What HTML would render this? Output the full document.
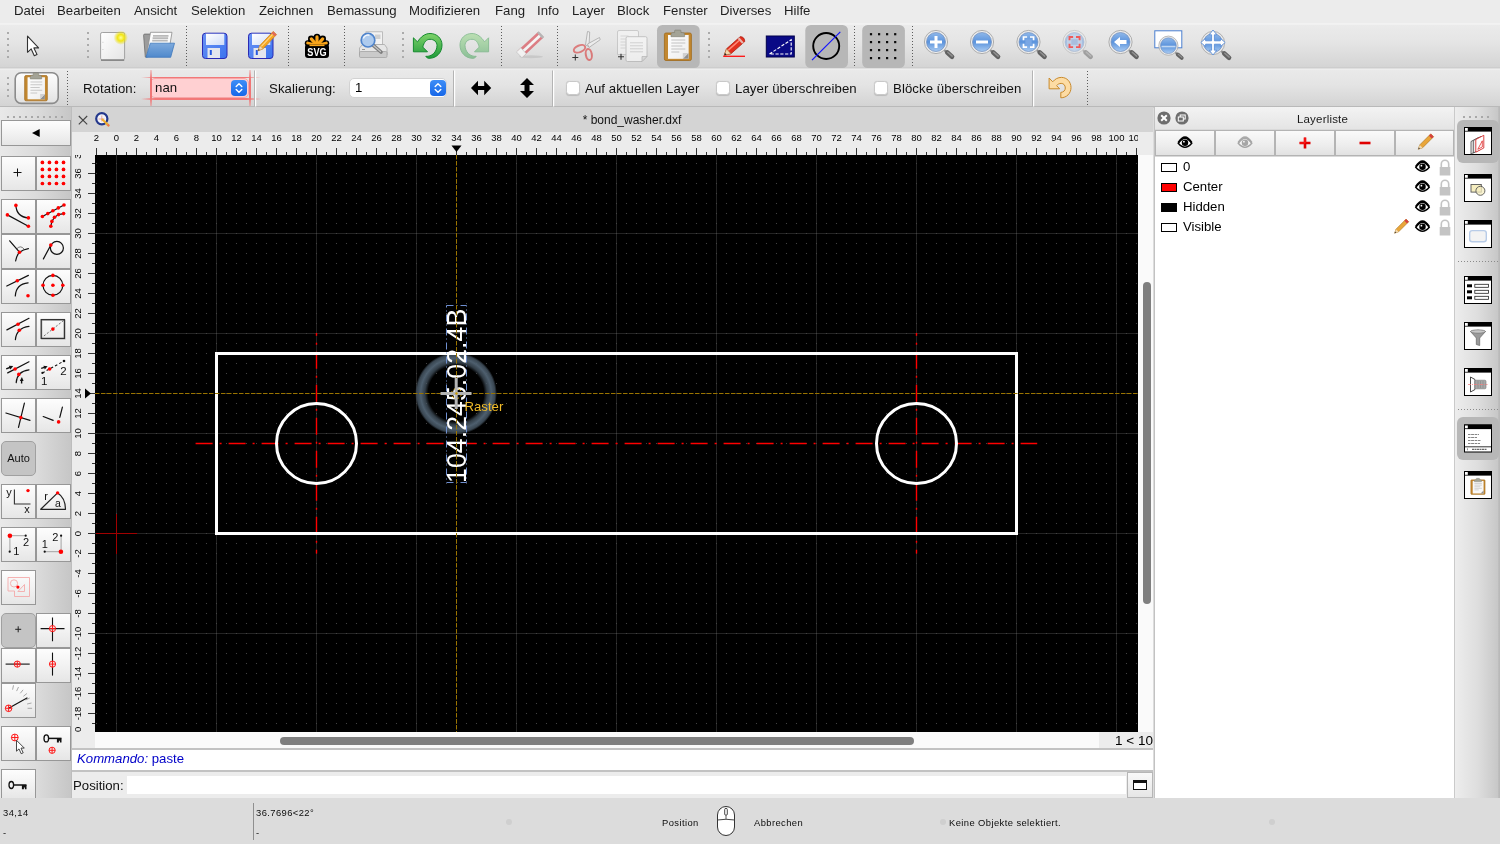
<!DOCTYPE html>
<html lang="de"><head><meta charset="utf-8"><title>bond_washer.dxf</title>
<style>
*{box-sizing:border-box;margin:0;padding:0}
html,body{width:1500px;height:844px;overflow:hidden;background:#dcdcdc;font-family:"Liberation Sans",sans-serif;color:#000}
.abs{position:absolute}
#menubar{position:absolute;left:0;top:0;width:1500px;height:24px;background:#ececec}
#menubar span{position:absolute;top:3px;font-size:13.2px;line-height:16px;color:#1e1e1e;white-space:nowrap}
#tb1{position:absolute;left:0;top:24px;width:1500px;height:45px;background:linear-gradient(#ebebeb,#e5e5e5 40%,#d3d3d3)}
#tb2{position:absolute;left:0;top:69px;width:1500px;height:39px;background:linear-gradient(#eaeaea,#e4e4e4 40%,#d2d2d2)}
.vdots{position:absolute;width:1px;background:repeating-linear-gradient(#6a6a6a 0 1px,transparent 1px 3px)}
.hdots{position:absolute;height:1px;background:repeating-linear-gradient(90deg,#8a8a8a 0 1px,transparent 1px 3px)}
.grip{position:absolute;width:2px;background:repeating-linear-gradient(#a8a8a8 0 2px,transparent 2px 6px)}
.hgrip{position:absolute;height:2px;background:repeating-linear-gradient(90deg,#a8a8a8 0 2px,transparent 2px 6px)}
.pressed{position:absolute;background:#b9b9b9;border-radius:5px}
.lbl{position:absolute;font-size:13.2px;line-height:16px;white-space:nowrap;color:#111;letter-spacing:.08px}
.chk{position:absolute;width:13.500px;height:13.500px;border-radius:3.5px;background:#fff;border:1px solid #c9c9c9;box-shadow:0 0.5px 1px rgba(0,0,0,.15)}
.combo{position:absolute;height:20px;border-radius:5px;background:#fff;border:1px solid #d2d2d2;font-size:13.2px;line-height:17px;padding-left:5px}
.combo i{position:absolute;right:1px;top:1px;width:16px;height:16px;border-radius:4px;background:linear-gradient(#3f8ef7,#1767e8)}
#left{position:absolute;left:0;top:107px;width:72px;height:691px;background:linear-gradient(90deg,#e9e9e9,#dcdcdc 50%,#c6c6c6);border-right:1px solid #bdbdbd}
.tbtn{position:absolute;width:35px;height:35px;border:1px solid #979797;background:linear-gradient(#fdfdfd,#f2f2f2 50%,#e6e6e6)}
.tbtn svg{position:absolute;left:-1px;top:-1px;width:35px;height:35px;overflow:visible}
.tbtn.on{background:#c4c4c4;border-radius:5px;border-color:#a0a0a0}
#tabbar{position:absolute;left:72px;top:107px;width:1081px;height:25px;background:#d4d4d4}
#rulerbg{position:absolute;left:72px;top:132px;width:1081px;height:616px;background:#ececec}
#canvas{position:absolute;left:95px;top:155px;width:1043px;height:577px;background:#000}
#vsb{position:absolute;left:1138px;top:155px;width:15px;height:577px;background:#fafafa}
#hsb{position:absolute;left:95px;top:732px;width:1058px;height:16px;background:#fafafa}
#midborder{position:absolute;left:1153.500px;top:107px;width:2px;height:691px;background:#c2c2c2}
#cmd{position:absolute;left:72px;top:748px;width:1081px;height:50px;background:#ececec}
#right{position:absolute;left:1155px;top:107px;width:299px;height:691px;background:#fff}
#rtb{position:absolute;left:1454px;top:107px;width:46px;height:691px;background:linear-gradient(90deg,#ededed,#dedede 50%,#c7c7c7 96%,#b9b9b9 97%);border-left:1px solid #cacaca}
#status{position:absolute;left:0;top:798px;width:1500px;height:46px;background:#dcdcdc}
#status span{position:absolute;font-size:9.400px;line-height:12px;white-space:nowrap;color:#0c0c0c;letter-spacing:.42px}
.lrow{position:absolute;left:0;width:298px;height:20px}
.lrow .sw{position:absolute;left:6px;top:6px;width:16px;height:9px;border:1px solid #000}
.lrow .nm{position:absolute;left:28px;top:2px;font-size:13.2px;line-height:16px}
.lbtn{position:absolute;top:23px;height:26px;width:60px;border:1px solid #b4b4b4;background:linear-gradient(#fafafa,#ededed 60%,#e2e2e2)}
.rico{position:absolute;left:9px;width:27px;height:27px;background:#fff;border:1px solid #000}
.rico:before{content:"";position:absolute;left:0;top:0;right:0;height:4px;background:#000}
.rico:after{content:"";position:absolute;left:0;top:0;width:3px;height:3px;background:#fff;border-right:1px solid #000;border-bottom:1px solid #000}
</style></head><body>

<div id="wrap" style="position:absolute;left:0;top:0;width:1500px;height:844px;will-change:transform">
<div id="menubar"><span style="left:14px">Datei</span><span style="left:57px">Bearbeiten</span><span style="left:134px">Ansicht</span><span style="left:191px">Selektion</span><span style="left:259px">Zeichnen</span><span style="left:327px">Bemassung</span><span style="left:409px">Modifizieren</span><span style="left:495px">Fang</span><span style="left:537px">Info</span><span style="left:572px">Layer</span><span style="left:617px">Block</span><span style="left:663px">Fenster</span><span style="left:720px">Diverses</span><span style="left:784px">Hilfe</span></div>
<div id="tb1"></div>
<div id="tb2">
<span class="lbl" style="left:83px;top:12px">Rotation:</span>
<div class="abs" style="left:141px;top:6px;width:120px;height:26px;overflow:visible">
<div class="abs" style="left:9px;top:3px;width:99px;height:20px;border-radius:5px;background:#ffd0d2;border:1px solid #f6a6a8"></div>
<div class="abs" style="left:0;top:1.500px;width:120px;height:1.600px;background:linear-gradient(90deg,rgba(240,90,90,0),#f27878 12%,#f27878 88%,rgba(240,90,90,0))"></div>
<div class="abs" style="left:0;top:23px;width:120px;height:1.600px;background:linear-gradient(90deg,rgba(240,90,90,0),#f27878 12%,#f27878 88%,rgba(240,90,90,0))"></div>
<div class="abs" style="left:8.500px;top:-5px;width:2px;height:37px;background:linear-gradient(rgba(240,110,110,.25),#f07676 25%,#f07676 75%,rgba(240,110,110,.25))"></div>
<div class="abs" style="left:107.800px;top:-5px;width:2px;height:37px;background:linear-gradient(rgba(240,110,110,.25),#f07676 25%,#f07676 75%,rgba(240,110,110,.25))"></div>
</div>
<span class="lbl" style="left:155px;top:11px">nan</span>
<i class="abs" style="left:231px;top:11px;width:16px;height:16px;border-radius:4px;background:linear-gradient(#3f8ef7,#1767e8)"></i>
<svg class="abs" style="left:231px;top:11px" width="16" height="16"><path d="M5.200 6.500L8 3.800L10.800 6.500M5.200 9.500L8 12.200L10.800 9.500" stroke="#fff" stroke-width="1.400" fill="none" stroke-linecap="round" stroke-linejoin="round"/></svg>
<span class="lbl" style="left:269px;top:12px">Skalierung:</span>
<div class="combo" style="left:349px;top:9px;width:98px"><span style="position:relative;top:0">1</span></div>
<i class="abs" style="left:430px;top:11px;width:16px;height:16px;border-radius:4px;background:linear-gradient(#3f8ef7,#1767e8)"></i>
<svg class="abs" style="left:430px;top:11px" width="16" height="16"><path d="M5.200 6.500L8 3.800L10.800 6.500M5.200 9.500L8 12.200L10.800 9.500" stroke="#fff" stroke-width="1.400" fill="none" stroke-linecap="round" stroke-linejoin="round"/></svg>
<div class="chk" style="left:566px;top:12px"></div><span class="lbl" style="left:585px;top:12px">Auf aktuellen Layer</span>
<div class="chk" style="left:716px;top:12px"></div><span class="lbl" style="left:735px;top:12px">Layer überschreiben</span>
<div class="chk" style="left:874px;top:12px"></div><span class="lbl" style="left:893px;top:12px">Blöcke überschreiben</span>

</div>
<div class="abs" style="left:0;top:22px;width:1500px;height:0"><svg style="position:absolute;left:0;top:-22px;overflow:visible" width="1500" height="110" viewBox="0 0 1500 110" font-family="Liberation Sans, sans-serif">
<defs>
<linearGradient id="gPage" x1="0" y1="0" x2="1" y2="1"><stop offset="0" stop-color="#ffffff"/><stop offset="1" stop-color="#e4e4e4"/></linearGradient>
<linearGradient id="gLens" x1="0" y1="0" x2="0" y2="1"><stop offset="0" stop-color="#8fb8ea"/><stop offset=".5" stop-color="#5b93dc"/><stop offset="1" stop-color="#a9cbf2"/></linearGradient>
<linearGradient id="gLensR" x1="0" y1="0" x2="0" y2="1"><stop offset="0" stop-color="#c3d4ea"/><stop offset=".5" stop-color="#a9c0e0"/><stop offset="1" stop-color="#d3e0f2"/></linearGradient>
<linearGradient id="gFlop" x1="0" y1="0" x2="1" y2="1"><stop offset="0" stop-color="#6b93f5"/><stop offset="1" stop-color="#3b73ee"/></linearGradient>
<linearGradient id="gLab" x1="0" y1="0" x2="1" y2="1"><stop offset="0" stop-color="#ffffff"/><stop offset="1" stop-color="#cfdcf8"/></linearGradient>
<linearGradient id="gGreen" x1="0" y1="0" x2="0" y2="1"><stop offset="0" stop-color="#7fd36a"/><stop offset="1" stop-color="#1f9a3a"/></linearGradient>
<radialGradient id="gGlow"><stop offset="0" stop-color="#ffff9a"/><stop offset=".45" stop-color="#f2e614"/><stop offset="1" stop-color="#e8dc10" stop-opacity=".0"/></radialGradient>
<g id="mag">
<path d="M7 7L11.500 10.800" stroke="#8a8a8a" stroke-width="2.200" stroke-linecap="round"/>
<path d="M11.300 10.600L16 14.700" stroke="#626262" stroke-width="4.700" stroke-linecap="round"/>
<path d="M11.800 10.300L16.200 14.100" stroke="#909090" stroke-width="1.500" stroke-linecap="round"/>
<circle cx="0" cy="0" r="11.600" fill="#ececec" stroke="#a6a6a6" stroke-width=".9"/>
<circle cx="0" cy="0" r="9.500" fill="url(#gLens)" stroke="#6f8cbc" stroke-width=".7"/>
</g>
<linearGradient id="gBtn" x1="0" y1="0" x2="0" y2="1"><stop offset="0" stop-color="#fdfdfd"/><stop offset=".5" stop-color="#f1f1f1"/><stop offset="1" stop-color="#e2e2e2"/></linearGradient>
<linearGradient id="gFold" x1="0" y1="0" x2="0" y2="1"><stop offset="0" stop-color="#7eaadd"/><stop offset="1" stop-color="#4f89cc"/></linearGradient>
</defs>
<!-- row separators -->
<rect x="0" y="23.500" width="1500" height="1" fill="#f7f7f7"/>
<rect x="0" y="67.5" width="1500" height="1" fill="#c6c6c6"/>
<rect x="0" y="68.5" width="1500" height="1" fill="#f2f2f2"/>
<rect x="0" y="106" width="1500" height="1.2" fill="#b9b9b9"/>
<!-- grips row1 -->
<g fill="#ababab">
<g id="grip5"><rect x="7" y="32" width="2" height="2"/><rect x="7" y="38" width="2" height="2"/><rect x="7" y="44" width="2" height="2"/><rect x="7" y="50" width="2" height="2"/><rect x="7" y="56" width="2" height="2"/></g>
<use href="#grip5" x="80"/><use href="#grip5" x="395"/><use href="#grip5" x="701"/>
</g>
<!-- dotted separators row1 -->
<g stroke="#5c5c5c" stroke-width="1" stroke-dasharray="1 2">
<path d="M186.5 26V67"/><path d="M288.5 26V67"/><path d="M344.5 26V67"/><path d="M501.5 26V67"/><path d="M557.5 26V67"/><path d="M854.5 26V67"/><path d="M912.5 26V67"/>
</g>
<!-- pressed backgrounds -->
<rect x="657" y="25" width="42.700" height="43" rx="5.500" fill="#b7b7b7"/>
<rect x="805.300" y="25" width="42.700" height="43" rx="5.500" fill="#b7b7b7"/>
<rect x="862.200" y="25" width="42.700" height="43" rx="5.500" fill="#b7b7b7"/>
<!-- arrow cursor -->
<path d="M27.500 36.200V52.300L31.200 48.900L34.300 55.800L37 54.600L33.900 47.900H38.600Z" fill="#fff" stroke="#333" stroke-width="1.1" stroke-linejoin="round"/>
<!-- new document -->
<rect x="100.600" y="32.500" width="24" height="27.300" rx="1.600" fill="url(#gPage)" stroke="#a2a2a2" stroke-width="1"/>
<path d="M101 60.200h23.200" stroke="#7e7e7e" stroke-width="1.300"/>
<path d="M102.300 42.300h1.200M102.300 49.500h1.200" stroke="#c8c8c8" stroke-width=".8"/>
<circle cx="120.800" cy="37.700" r="7.200" fill="url(#gGlow)"/>
<!-- open folder -->
<path d="M143.600 35.300q0-1.200 1.200-1.200h6.500l-3.800 23h-2.200z" fill="#9c9c9c" stroke="#6c6c6c" stroke-width=".8"/>
<path d="M150.500 32.300h21.500l-4 23.700h-21.500z" fill="#fbfbfb" stroke="#8c8c8c" stroke-width=".8"/>
<path d="M153 35.800h15.500M152.600 38.200h15.500M152.200 40.600h15.500" stroke="#b9b9b9" stroke-width="1.700"/>
<path d="M150.300 43.200h24.200l-3.800 14.100h-24.700z" fill="url(#gFold)" stroke="#3f78bd" stroke-width=".8" stroke-linejoin="round"/>
<!-- save -->
<g id="floppy">
<rect x="202.500" y="33.200" width="24.500" height="25.300" rx="3" fill="url(#gFlop)" stroke="#2a2ab4" stroke-width="1"/>
<path d="M206 33.800h18.300v11.200h-18.300z" fill="url(#gLab)"/>
<rect x="207.500" y="48" width="12.500" height="10" fill="#e4e6ee"/>
<rect x="209.800" y="50" width="2" height="5" fill="#2a5be0"/>
</g>
<use href="#floppy" x="46"/>
<!-- pencil on save-as -->
<g transform="translate(258,50.800) rotate(-46.500)">
<path d="M0 0L5 -2.300H24.500V2.300H5Z" fill="#f5a623" stroke="#c8780a" stroke-width=".6"/>
<path d="M0 0L5 -2.300V2.300Z" fill="#f3d9b0" stroke="#b98a4a" stroke-width=".4"/>
<path d="M0 0L1.800 -.8V.8Z" fill="#333"/>
<path d="M5.500 -.600H22" stroke="#ffd889" stroke-width="1.100"/>
<rect x="22" y="-2.300" width="2.500" height="4.600" fill="#e06a5a"/>
</g>
<!-- SVG logo -->
<g>
<circle cx="317" cy="37.200" r="3.500" fill="#000"/><circle cx="311.300" cy="38.900" r="3.300" fill="#000"/><circle cx="322.700" cy="38.900" r="3.300" fill="#000"/><circle cx="307.800" cy="43.200" r="3" fill="#000"/><circle cx="326.200" cy="43.200" r="3" fill="#000"/>
<path d="M308 40h18v7h-18z" fill="#000"/>
<g stroke="#f9a51a" stroke-width="3.200" stroke-linecap="round" fill="none"><path d="M317 45.500V36.900"/><path d="M317 45.500L311.300 38.900"/><path d="M317 45.500L322.700 38.900"/><path d="M317 45.500L307.800 43.200"/><path d="M317 45.500L326.200 43.200"/></g>
<path d="M305 46.500q0-2 2-2h20q2 0 2 2v8.500q0 3-3 3h-18q-3 0-3-3z" fill="#000"/>
<path d="M309.500 45.300h15" stroke="#f9a51a" stroke-width="1.600"/>
<text x="317" y="56.300" font-size="11.700" font-weight="bold" fill="#fff" text-anchor="middle" textLength="19.300" lengthAdjust="spacingAndGlyphs">SVG</text>
</g>
<!-- print preview -->
<g>
<rect x="366" y="31.800" width="16.500" height="13" fill="#f2f2f2" stroke="#b0b0b0" stroke-width=".8"/>
<rect x="375" y="34.500" width="5.500" height="4.500" fill="#cfcfcf"/>
<path d="M362.500 44.500h22l2.500 3.500v7h-27.500v-7z" fill="#e6e6e6" stroke="#a8a8a8" stroke-width=".8"/>
<rect x="359.500" y="51.500" width="27.500" height="6" rx="1.200" fill="#cacaca" stroke="#9e9e9e" stroke-width=".7"/>
<path d="M362 49.500h3" stroke="#999" stroke-width="1"/>
<path d="M373 45.200L381 52" stroke="#7d7d7d" stroke-width="3.600" stroke-linecap="round"/>
<path d="M373.500 45.500L380.500 51.500" stroke="#c4c4c4" stroke-width="1.200" stroke-linecap="round"/>
<circle cx="368" cy="40.200" r="6.800" fill="#aecbee" stroke="#4f84cc" stroke-width="1.700"/>
<path d="M363.300 38.500a5.200 5.200 0 0 1 6.200-3.300" stroke="#f2f7fd" stroke-width="1.500" fill="none"/>
</g>
<!-- undo -->
<g id="undo">
<path d="M413.400 37.800L417.500 41.900C420.500 37 425 33.500 430 33.500C437 33.500 442 38.500 442 45C442 53 436 58.500 429 58.300C427.500 58.200 426.300 57.400 425.800 56.300C431.500 57 437 52 437 45.500C437 41.800 434 39.300 430 39.300C426.500 39.300 424 42 422.800 47.100L427.500 51.800H413.400Z" fill="url(#gGreen)" stroke="#158a2e" stroke-width="1" stroke-linejoin="round"/>
</g>
<!-- redo (disabled look) -->
<g transform="translate(902,0) scale(-1,1)" opacity=".42"><use href="#undo"/></g>
<!-- eraser -->
<g opacity=".62">
<ellipse cx="531" cy="56.800" rx="12" ry="1.500" fill="#bdbdbd"/>
<g transform="translate(530.500,44.300) rotate(-43)">
<rect x="-14.500" y="-4" width="29" height="8" rx="1" fill="#d8404a"/>
<rect x="-14.500" y="-1.300" width="29" height="2.800" fill="#fff"/>
<rect x="-15.500" y="-4" width="6" height="8" fill="#fff" stroke="#aaa" stroke-width=".6"/>
<rect x="12.500" y="-4" width="2.500" height="8" fill="#999"/>
</g></g>
<!-- cut -->
<g opacity=".6">
<path d="M585.500 45L587.500 31.500L589.700 32L589 46.500Z" fill="#f2f2f2" stroke="#7d7d7d" stroke-width=".8"/>
<path d="M587.500 44L599.500 37.500L600.200 39.700L589 47.500Z" fill="#f2f2f2" stroke="#7d7d7d" stroke-width=".8"/>
<ellipse cx="579.500" cy="48.800" rx="6" ry="3.300" transform="rotate(-22 579.500 48.800)" fill="none" stroke="#d83a3a" stroke-width="2"/>
<ellipse cx="588.800" cy="54.500" rx="3" ry="5.600" transform="rotate(-10 588.800 54.500)" fill="none" stroke="#d83a3a" stroke-width="2"/>
</g>
<path d="M572.300 57.500h6M575.300 54.500v6" stroke="#333" stroke-width="1"/>
<!-- copy -->
<g opacity=".6">
<path d="M617.500 32q0-1.500 1.500-1.500h18q1.500 0 1.500 1.500v22.500h-21z" fill="#f6f6f6" stroke="#a8a8a8" stroke-width=".8"/>
<path d="M620.500 36h8M620.500 39h5M620.500 42h5M620.500 45h5M620.500 48h5" stroke="#c4c4c4" stroke-width=".9"/>
<path d="M626 38.200q0-1.500 1.500-1.500h18q1.500 0 1.500 1.500v18.300l-5 5h-14.500q-1.500 0-1.500-1.500z" fill="#fbfbfb" stroke="#9a9a9a" stroke-width=".8"/>
<path d="M647 56.500h-5v5z" fill="#d6d6d6" stroke="#9a9a9a" stroke-width=".7"/>
<path d="M630 42.800h13M630 45.800h13M630 48.800h13M630 51.800h13" stroke="#bdbdbd" stroke-width=".9"/>
</g>
<path d="M618 56.700h6M621 53.700v6" stroke="#333" stroke-width="1.100"/>
<!-- paste (clipboard) -->
<g id="clip">
<rect x="664.400" y="33" width="27" height="27.500" rx="1.600" fill="#c2872f" stroke="#a06a1c" stroke-width=".8"/>
<path d="M668 35h20.500v23.700h-20.500z" fill="#fbfbfb"/>
<path d="M668 35h20.500v23.700h-20.500z" fill="url(#gPage)" opacity=".6"/>
<path d="M671.300 40h14M671.300 43h14M671.300 46h11M671.300 49h14M671.300 52h8" stroke="#c2c2c2" stroke-width="1"/>
<path d="M688.500 53v5.700h-5.700z" fill="#8f8f8f"/>
<path d="M682.800 58.700l5.700-5.700h-5.700z" fill="#d0d0d0"/>
<path d="M671 34.600q0-2 2-2h1.600v-1.700q0-.8.800-.8h4.800q.8 0 .8.800v1.700h1.600q2 0 2 2v2.100h-13.600z" fill="#a3a396" stroke="#7d7d70" stroke-width=".6"/>
</g>
<!-- pencil draw -->
<g transform="translate(724.200,55.300) rotate(-41.500)">
<path d="M0 0L6 -3.300H24.500Q27.500 0 24.500 3.300H6Z" fill="#e2301e" stroke="#a81c10" stroke-width=".7"/>
<path d="M0 0L6 -3.300V3.300Z" fill="#f3d7ae" stroke="#a8793a" stroke-width=".5"/>
<path d="M0 0L2.300 -1.200V1.200Z" fill="#222"/>
<path d="M6.500 -1.200H21" stroke="#ff8a78" stroke-width="1.500"/>
<rect x="21" y="-3.300" width="2.200" height="6.600" fill="#e8b8b0"/>
</g>
<path d="M723.200 56.300H745" stroke="#ff1010" stroke-width="1.300"/>
<!-- isometric/blue -->
<rect x="766.300" y="36" width="28" height="21" fill="#0a0a86" stroke="#00004c" stroke-width="1"/>
<path d="M769.500 54L791.200 39.700V54Z" fill="none" stroke="#fff" stroke-width="1.100" stroke-dasharray="3.200 1.600"/>
<!-- circle slash -->
<circle cx="826.200" cy="46" r="13" fill="none" stroke="#000" stroke-width="1.900"/>
<path d="M812 60.200L840.300 31.800" stroke="#1414ff" stroke-width="1.200"/>
<!-- grid dots -->
<g fill="#0a0a0a"><rect x="869.9" y="33.1" width="2.200" height="2.200"/><rect x="878" y="33.1" width="2.200" height="2.200"/><rect x="886" y="33.1" width="2.200" height="2.200"/><rect x="894.1" y="33.1" width="2.200" height="2.200"/><rect x="869.9" y="41" width="2.200" height="2.200"/><rect x="878" y="41" width="2.200" height="2.200"/><rect x="886" y="41" width="2.200" height="2.200"/><rect x="894.1" y="41" width="2.200" height="2.200"/><rect x="869.9" y="49" width="2.200" height="2.200"/><rect x="878" y="49" width="2.200" height="2.200"/><rect x="886" y="49" width="2.200" height="2.200"/><rect x="894.1" y="49" width="2.200" height="2.200"/><rect x="869.9" y="57" width="2.200" height="2.200"/><rect x="878" y="57" width="2.200" height="2.200"/><rect x="886" y="57" width="2.200" height="2.200"/><rect x="894.1" y="57" width="2.200" height="2.200"/></g>
<!-- zoom icons -->
<use href="#mag" x="936" y="42"/>
<path d="M930 42h12M936 36v12" stroke="#fff" stroke-width="3"/>
<use href="#mag" x="982" y="42"/>
<path d="M976 42h12" stroke="#fff" stroke-width="3"/>
<use href="#mag" x="1028.500" y="42"/>
<rect x="1025.300" y="39.200" width="6.400" height="5.600" fill="#7aa7e4"/>
<path d="M1023.500 40.300v-3.300h3.600M1030 37h3.600v3.300M1033.600 43.800v3.300h-3.600M1027.100 47.100h-3.600v-3.300" stroke="#fff" stroke-width="1.700" fill="none"/>
<g opacity=".5"><use href="#mag" x="1074.500" y="42"/></g>
<circle cx="1074.500" cy="42" r="7.800" fill="#cdd9ea" opacity=".7"/>
<rect x="1071.300" y="39.200" width="6.400" height="5.600" fill="#a9bede"/>
<path d="M1069.500 40.300v-3.300h3.600M1076 37h3.600v3.300M1079.600 43.800v3.300h-3.600M1073.100 47.100h-3.600v-3.300" stroke="#ee5a5a" stroke-width="1.900" fill="none"/>
<use href="#mag" x="1120.500" y="42"/>
<path d="M1114 42l6-5v3h6.500v4h-6.500v3z" fill="#fff"/>
<rect x="1154.800" y="30.800" width="27" height="17" fill="#fff" stroke="#4a7fd0" stroke-width="1"/>
<g transform="translate(1168.400,45.700) scale(.83)"><use href="#mag"/></g>
<path d="M1161.500 46.500h14" stroke="#d6e6f8" stroke-width="1.600" opacity=".8"/>
<use href="#mag" x="1213" y="43"/>
<path d="M1213 30l3.800 4.800h-2.400v6h6v-2.400l4.800 4.100l-4.800 4.100v-2.400h-6v6h2.400l-3.800 4.800l-3.800-4.800h2.400v-6h-6v2.400l-4.800-4.100l4.800-4.100v2.400h6v-6h-2.400z" fill="#fff" stroke="#5b8fd8" stroke-width=".9"/>
<!-- ============ row 2 icons ============ -->
<g fill="#ababab"><rect x="7" y="77" width="2" height="2"/><rect x="7" y="83" width="2" height="2"/><rect x="7" y="89" width="2" height="2"/><rect x="7" y="95" width="2" height="2"/></g>
<rect x="15.200" y="72.800" width="43" height="30.600" rx="6" fill="url(#gBtn)" stroke="#8c8c8c" stroke-width="1.600"/>
<g transform="translate(36,88.200) scale(.84,.92) translate(-677.900,-46.750)"><use href="#clip"/></g>
<g stroke="#5c5c5c" stroke-width="1" stroke-dasharray="1 2"><path d="M67.500 71V106"/><path d="M1087.500 71V106"/></g>
<g><rect x="255" y="70.500" width="1.200" height="36" fill="#fff"/><rect x="254" y="70.500" width="1" height="36" fill="#b4b4b4"/><rect x="454" y="70.500" width="1.200" height="36" fill="#fff"/><rect x="453" y="70.500" width="1" height="36" fill="#b4b4b4"/><rect x="553" y="70.500" width="1.200" height="36" fill="#fff"/><rect x="552" y="70.500" width="1" height="36" fill="#b4b4b4"/><rect x="1033" y="70.500" width="1.200" height="36" fill="#fff"/><rect x="1032" y="70.500" width="1" height="36" fill="#b4b4b4"/></g>
<!-- flip arrows -->
<path d="M471 88l7-7.200v5.300h6.200v-5.300l7 7.200l-7 7.200v-5.300h-6.200v5.300z" fill="#000"/>
<path d="M527 78l7 7h-4.500v6h4.500l-7 7l-7-7h4.500v-6h-4.500z" fill="#000"/>
<!-- reset arrow (orange undo) -->
<path d="M1049.100 78L1052.700 81.800C1055 79 1058 77.400 1061.400 77.400C1067 77.400 1071 82 1071 87.600C1071 93.500 1066.500 97.800 1060.800 97.800L1060.800 92.400C1063.500 92.200 1065.300 90.500 1065.300 88C1065.300 85.300 1063.700 83.400 1061.200 83.400C1059.300 83.400 1057.800 84.200 1056.600 85.600L1059.600 88.800H1049.100Z" fill="#fddca4" stroke="#c98a2c" stroke-width="1" stroke-linejoin="round"/>
</svg>
</div>
<div id="left">
<div class="hgrip" style="left:7px;top:9px;width:56px"></div>
<div class="tbtn" style="left:1px;top:13px;width:70px;height:26px"><svg style="width:68px;height:24px" viewBox="0 0 68 24"><path d="M31 13L38.700 9V17Z" fill="#000"/></svg></div>
<div class="tbtn" style="left:1px;top:49px"><svg viewBox="0 0 35 35"><path d="M12.500 16.500h8M16.500 12.500v8" stroke="#111" stroke-width="1"/></svg></div>
<div class="tbtn" style="left:36px;top:49px"><svg viewBox="0 0 35 35"><circle cx="6.4" cy="6.4" r="1.85" fill="#ff0000"/><circle cx="6.4" cy="13.43" r="1.85" fill="#ff0000"/><circle cx="6.4" cy="20.46" r="1.85" fill="#ff0000"/><circle cx="6.4" cy="27.490000000000002" r="1.85" fill="#ff0000"/><circle cx="13.43" cy="6.4" r="1.85" fill="#ff0000"/><circle cx="13.43" cy="13.43" r="1.85" fill="#ff0000"/><circle cx="13.43" cy="20.46" r="1.85" fill="#ff0000"/><circle cx="13.43" cy="27.490000000000002" r="1.85" fill="#ff0000"/><circle cx="20.46" cy="6.4" r="1.85" fill="#ff0000"/><circle cx="20.46" cy="13.43" r="1.85" fill="#ff0000"/><circle cx="20.46" cy="20.46" r="1.85" fill="#ff0000"/><circle cx="20.46" cy="27.490000000000002" r="1.85" fill="#ff0000"/><circle cx="27.490000000000002" cy="6.4" r="1.85" fill="#ff0000"/><circle cx="27.490000000000002" cy="13.43" r="1.85" fill="#ff0000"/><circle cx="27.490000000000002" cy="20.46" r="1.85" fill="#ff0000"/><circle cx="27.490000000000002" cy="27.490000000000002" r="1.85" fill="#ff0000"/></svg></div>
<div class="tbtn" style="left:1px;top:92px"><svg viewBox="0 0 35 35"><path d="M6.400 15.900L27.400 27.300M14.900 6.400Q15.500 18 27.400 18.900" stroke="#111" stroke-width="1.2" fill="none" stroke-linecap="round"/><circle cx="6.4" cy="15.9" r="1.8" fill="#ff0000"/><circle cx="27.4" cy="27.3" r="1.8" fill="#ff0000"/><circle cx="14.9" cy="6.4" r="1.8" fill="#ff0000"/><circle cx="27.4" cy="18.9" r="1.8" fill="#ff0000"/></svg></div>
<div class="tbtn" style="left:36px;top:92px"><svg viewBox="0 0 35 35"><path d="M6.400 17.500L28 6M14.800 27.300L15.900 22.400L18.500 18.200L22.600 15.600L27.600 14.600" stroke="#111" stroke-width="1.2" fill="none" stroke-linecap="round"/><circle cx="6.4" cy="17.5" r="1.8" fill="#ff0000"/><circle cx="11.8" cy="14.6" r="1.8" fill="#ff0000"/><circle cx="16.9" cy="11.8" r="1.8" fill="#ff0000"/><circle cx="22.3" cy="8.9" r="1.8" fill="#ff0000"/><circle cx="28" cy="6" r="1.8" fill="#ff0000"/><circle cx="14.8" cy="27.3" r="1.8" fill="#ff0000"/><circle cx="15.9" cy="22.4" r="1.8" fill="#ff0000"/><circle cx="18.5" cy="18.2" r="1.8" fill="#ff0000"/><circle cx="22.6" cy="15.6" r="1.8" fill="#ff0000"/><circle cx="27.6" cy="14.6" r="1.8" fill="#ff0000"/></svg></div>
<div class="tbtn" style="left:1px;top:127px"><svg viewBox="0 0 35 35"><path d="M8.700 6.800L18.500 18.200Q22 15.500 27.400 14.600M18.500 18.200Q15.300 22 14.600 27" stroke="#111" stroke-width="1.2" fill="none" stroke-linecap="round"/><path d="M15.800 14.800Q19.500 10.800 23 15" stroke="#444" stroke-width=".7" fill="none"/><circle cx="18.5" cy="18.2" r="1.8" fill="#ff0000"/></svg></div>
<div class="tbtn" style="left:36px;top:127px"><svg viewBox="0 0 35 35"><path d="M7.400 24.900L14.800 11.100" stroke="#111" stroke-width="1.2" fill="none" stroke-linecap="round"/><circle cx="20.900" cy="13.900" r="6.500" stroke="#111" stroke-width="1.2" fill="none" stroke-linecap="round"/><circle cx="14.8" cy="11.1" r="1.8" fill="#ff0000"/></svg></div>
<div class="tbtn" style="left:1px;top:162px"><svg viewBox="0 0 35 35"><path d="M5.800 17L27.400 6.400M14.300 27Q15 15 27.100 13.900" stroke="#111" stroke-width="1.2" fill="none" stroke-linecap="round"/><circle cx="16.3" cy="11.8" r="1.8" fill="#ff0000"/><circle cx="27" cy="26.7" r="1.8" fill="#ff0000"/></svg></div>
<div class="tbtn" style="left:36px;top:162px"><svg viewBox="0 0 35 35"><circle cx="16.900" cy="16.300" r="9.900" stroke="#111" stroke-width="1.2" fill="none" stroke-linecap="round"/><circle cx="16.9" cy="16.3" r="1.8" fill="#ff0000"/><circle cx="16.9" cy="6.4" r="1.8" fill="#ff0000"/><circle cx="16.9" cy="26.2" r="1.8" fill="#ff0000"/><circle cx="7" cy="16.3" r="1.8" fill="#ff0000"/><circle cx="26.8" cy="16.3" r="1.8" fill="#ff0000"/></svg></div>
<div class="tbtn" style="left:1px;top:205px"><svg viewBox="0 0 35 35"><path d="M5.900 17.900L28 6.300M14.400 27.600Q15.500 15.800 28 14.300" stroke="#111" stroke-width="1.2" fill="none" stroke-linecap="round"/><circle cx="17" cy="12.2" r="1.8" fill="#ff0000"/><circle cx="18.3" cy="18.3" r="1.8" fill="#ff0000"/></svg></div>
<div class="tbtn" style="left:36px;top:205px"><svg viewBox="0 0 35 35"><rect x="5.800" y="8.200" width="23.200" height="18.800" fill="none" stroke="#bbb" stroke-width="1.200"/><rect x="5.200" y="7.600" width="23.200" height="18.800" fill="none" stroke="#333" stroke-width="1.300"/><path d="M7.900 24L27.500 8.600" stroke="#555" stroke-width=".8" stroke-dasharray="2.200 1.600"/><circle cx="16.9" cy="17.1" r="1.8" fill="#ff0000"/></svg></div>
<div class="tbtn" style="left:1px;top:248px"><svg viewBox="0 0 35 35"><path d="M6.700 17.900L28 6.800M15.200 27.600Q16 16.200 28 14.800" stroke="#111" stroke-width="1.2" fill="none" stroke-linecap="round"/><path d="M5.200 13.900L9.500 12.200" stroke="#111" stroke-width="1.500"/><path d="M12.200 11.100L7.800 10.800L9.500 14.400Z" fill="#111"/><path d="M20.600 28.500V25.500" stroke="#111" stroke-width="1.400"/><path d="M20.900 22L18.800 26L22.600 26Z" fill="#111"/><circle cx="14.1" cy="14" r="1.8" fill="#ff0000"/><circle cx="17.8" cy="19.4" r="1.8" fill="#ff0000"/></svg></div>
<div class="tbtn" style="left:36px;top:248px"><svg viewBox="0 0 35 35"><path d="M6.400 17.900L28 6" stroke="#111" stroke-width="1.100" stroke-dasharray="2.600 2.200"/><path d="M5.200 13.400L8.500 12.400" stroke="#111" stroke-width="1.500"/><path d="M11.600 11.300L7.400 10.800L8.800 14.500Z" fill="#111"/><circle cx="28" cy="6" r="1.300" fill="#111"/><circle cx="6.400" cy="17.900" r="1.100" fill="#111"/><circle cx="13.6" cy="14" r="1.8" fill="#ff0000"/><text x="5" y="30.300" font-size="11.500" fill="#111">1</text><text x="24.300" y="20.300" font-size="11.500" fill="#111">2</text></svg></div>
<div class="tbtn" style="left:1px;top:291px"><svg viewBox="0 0 35 35"><path d="M4.900 15L29 22.400M23.400 5.100L17.500 29.300" stroke="#111" stroke-width="1.2" fill="none" stroke-linecap="round"/><circle cx="19.8" cy="19.6" r="1.8" fill="#ff0000"/></svg></div>
<div class="tbtn" style="left:36px;top:291px"><svg viewBox="0 0 35 35"><path d="M7.200 18.500L17.200 22.400M26.400 9.200L23.800 19.300" stroke="#111" stroke-width="1.2" fill="none" stroke-linecap="round"/><circle cx="22.6" cy="23.9" r="1.8" fill="#ff0000"/></svg></div>
<div class="tbtn" style="left:1px;top:377px"><svg viewBox="0 0 35 35"><path d="M13.400 5.600V20H29.500" stroke="#333" stroke-width="1.100" fill="none"/><circle cx="27" cy="6.6" r="1.7" fill="#ff0000"/><text x="5.200" y="11.800" font-size="11" fill="#111">y</text><text x="23.300" y="28.600" font-size="11" fill="#111">x</text></svg></div>
<div class="tbtn" style="left:36px;top:377px"><svg viewBox="0 0 35 35"><path d="M21.600 8.900L4.700 25.300H29.500Q29.300 13.500 21.600 8.900" stroke="#222" stroke-width="1.200" fill="none" stroke-linejoin="round"/><circle cx="21.6" cy="8.9" r="1.7" fill="#ff0000"/><text x="8.300" y="15.500" font-size="11" fill="#111">r</text><text x="19" y="23" font-size="10.500" fill="#111">a</text></svg></div>
<div class="tbtn" style="left:1px;top:420px"><svg viewBox="0 0 35 35"><path d="M8.900 8.700H24.700M8.900 8.700V24.700" stroke="#9a9a9a" stroke-width=".9"/><circle cx="8.9" cy="8.7" r="2.3" fill="#ff0000"/><circle cx="24.700" cy="8.700" r="1.100" fill="#111"/><circle cx="8.700" cy="24.700" r="1.100" fill="#111"/><text x="22" y="19.400" font-size="11" fill="#111">2</text><text x="12.200" y="28" font-size="11" fill="#111">1</text></svg></div>
<div class="tbtn" style="left:36px;top:420px"><svg viewBox="0 0 35 35"><path d="M25.100 8.700V24.700H8.700" stroke="#9a9a9a" stroke-width=".9" fill="none"/><circle cx="24.9" cy="24.7" r="2.3" fill="#ff0000"/><circle cx="25.100" cy="8.700" r="1.100" fill="#111"/><circle cx="8.700" cy="24.700" r="1.100" fill="#111"/><text x="16.300" y="14" font-size="11" fill="#111">2</text><text x="5.800" y="21.400" font-size="11" fill="#111">1</text></svg></div>
<div class="tbtn" style="left:1px;top:463px"><svg viewBox="0 0 35 35"><g stroke="#f4a9a9" stroke-width=".9" fill="none"><path d="M7 7.500H28.500V26.500H13.500V21H7Z"/><circle cx="13" cy="13.400" r="3.600"/><path d="M16.900 21.500H23.500V14.500Z"/></g><circle cx="16.9" cy="17.1" r="1.6" fill="#ff0000"/></svg></div>
<div class="tbtn on" style="left:1px;top:506px"><svg viewBox="0 0 35 35"><path d="M14.200 16.300h6M17.200 13.300v6" stroke="#222" stroke-width="1"/></svg></div>
<div class="tbtn" style="left:36px;top:506px"><svg viewBox="0 0 35 35"><path d="M4.600 15.600H28.500M16.500 4.600V28.200" stroke="#111" stroke-width="1.100"/><g stroke="#ff1a1a" stroke-width="1" fill="none"><circle cx="16.5" cy="15.6" r="3.1"/><path d="M13.4 15.6H19.6M16.5 12.5V18.7"/></g></svg></div>
<div class="tbtn" style="left:1px;top:541px"><svg viewBox="0 0 35 35"><path d="M4.600 16.100H28.700" stroke="#111" stroke-width="1.100"/><g stroke="#ff1a1a" stroke-width="1" fill="none"><circle cx="16.3" cy="16.1" r="3.1"/><path d="M13.200000000000001 16.1H19.400000000000002M16.3 13.000000000000002V19.200000000000003"/></g></svg></div>
<div class="tbtn" style="left:36px;top:541px"><svg viewBox="0 0 35 35"><path d="M16.500 4.600V27.600" stroke="#111" stroke-width="1.100"/><g stroke="#ff1a1a" stroke-width="1" fill="none"><circle cx="16.5" cy="16.1" r="3.1"/><path d="M13.4 16.1H19.6M16.5 13.000000000000002V19.200000000000003"/></g></svg></div>
<div class="tbtn" style="left:1px;top:576px"><svg viewBox="0 0 35 35"><path d="M26.6 25.3L31.1 25.3M26.1 21.0L30.5 20.0M24.7 17.0L28.7 15.0M22.4 13.3L25.9 10.5M19.3 10.3L22.1 6.8M15.6 8.1L17.5 4.0M11.6 6.7L12.5 2.3" stroke="#a8a8a8" stroke-width="1"/><path d="M7.600 25.300L26.400 14.700" stroke="#111" stroke-width="1.200"/><g stroke="#ff1a1a" stroke-width="1" fill="none"><circle cx="7.6" cy="25.3" r="3.3"/><path d="M4.3 25.3H10.899999999999999M7.6 22.0V28.6"/></g></svg></div>
<div class="tbtn" style="left:1px;top:619px"><svg viewBox="0 0 35 35"><g stroke="#ff1a1a" stroke-width="1" fill="none"><circle cx="13.8" cy="11.5" r="3.4"/><path d="M10.4 11.5H17.2M13.8 8.1V14.9"/></g><path d="M15.500 14.300V25.200L18 22.900L20.200 27.700L22.200 26.800L20 22.100H23.300Z" fill="#fff" stroke="#333" stroke-width=".9" stroke-linejoin="round"/></svg></div>
<div class="tbtn" style="left:36px;top:619px"><svg viewBox="0 0 35 35"><ellipse cx="10.3" cy="12.4" rx="2.300" ry="3.500" fill="none" stroke="#111" stroke-width="1.300"/><path d="M12.8 12.4H25.5" stroke="#111" stroke-width="1.500"/><path d="M20.9 12.4h4.600v4.200h-1.600v-1.800h-1v1.800h-2z" fill="#111"/><g stroke="#ff1a1a" stroke-width="1" fill="none"><circle cx="16.1" cy="24.3" r="3.1"/><path d="M13.000000000000002 24.3H19.200000000000003M16.1 21.2V27.400000000000002"/></g></svg></div>
<div class="tbtn" style="left:1px;top:662px;height:30px;border-bottom:none"><svg viewBox="0 0 35 35"><ellipse cx="10.3" cy="16" rx="2.300" ry="3.500" fill="none" stroke="#111" stroke-width="1.300"/><path d="M12.8 16H25.5" stroke="#111" stroke-width="1.500"/><path d="M20.9 16h4.600v4.200h-1.600v-1.800h-1v1.800h-2z" fill="#111"/></svg></div>
<div class="tbtn on" style="left:1px;top:334px;font-size:11px;line-height:33px;text-align:center;color:#111">Auto</div>
</div>
<div id="tabbar"><svg class="abs" style="left:0;top:0" width="60" height="24" viewBox="72 107 60 24">
<path d="M78.800 116L87.200 124.400M87.200 116L78.800 124.400" stroke="#444" stroke-width="1.100"/>
<path d="M104.500 121.500L108.500 125.500" stroke="#e8a020" stroke-width="2.400" stroke-linecap="round"/>
<circle cx="101.800" cy="118.800" r="5.600" fill="#f4f4f8" stroke="#24388c" stroke-width="2.200"/>
<path d="M98.500 119h6M101.800 115.500v6" stroke="#d88" stroke-width=".7"/>
<path d="M102.500 119.500L107.800 124.800" stroke="#f0b030" stroke-width="2" stroke-linecap="round"/>
<circle cx="108.300" cy="125.300" r="1" fill="#e66"/>
</svg>
<span class="abs" style="left:0;top:6px;width:1120px;text-align:center;font-size:12px;line-height:14px;color:#111">* bond_washer.dxf</span>
</div>
<div id="rulerbg"></div>
<svg class="abs" style="left:72px;top:131px" width="1081" height="617" viewBox="72 131 1081 617" font-family="Liberation Sans, sans-serif" font-size="9.500" fill="#000"><defs><clipPath id="ct"><rect x="72" y="131" width="1066" height="24"/></clipPath><clipPath id="cl"><rect x="72" y="155" width="23" height="577"/></clipPath></defs><path d="M96.5 148V155M106.5 152V155M116.5 148V155M126.5 152V155M136.5 148V155M146.5 152V155M156.5 148V155M166.5 152V155M176.5 148V155M186.5 152V155M196.5 148V155M206.5 152V155M216.5 148V155M226.5 152V155M236.5 148V155M246.5 152V155M256.5 148V155M266.5 152V155M276.5 148V155M286.5 152V155M296.5 148V155M306.5 152V155M316.5 148V155M326.5 152V155M336.5 148V155M346.5 152V155M356.5 148V155M366.5 152V155M376.5 148V155M386.5 152V155M396.5 148V155M406.5 152V155M416.5 148V155M426.5 152V155M436.5 148V155M446.5 152V155M456.5 148V155M466.5 152V155M476.5 148V155M486.5 152V155M496.5 148V155M506.5 152V155M516.5 148V155M526.5 152V155M536.5 148V155M546.5 152V155M556.5 148V155M566.5 152V155M576.5 148V155M586.5 152V155M596.5 148V155M606.5 152V155M616.5 148V155M626.5 152V155M636.5 148V155M646.5 152V155M656.5 148V155M666.5 152V155M676.5 148V155M686.5 152V155M696.5 148V155M706.5 152V155M716.5 148V155M726.5 152V155M736.5 148V155M746.5 152V155M756.5 148V155M766.5 152V155M776.5 148V155M786.5 152V155M796.5 148V155M806.5 152V155M816.5 148V155M826.5 152V155M836.5 148V155M846.5 152V155M856.5 148V155M866.5 152V155M876.5 148V155M886.5 152V155M896.5 148V155M906.5 152V155M916.5 148V155M926.5 152V155M936.5 148V155M946.5 152V155M956.5 148V155M966.5 152V155M976.5 148V155M986.5 152V155M996.5 148V155M1006.5 152V155M1016.5 148V155M1026.5 152V155M1036.5 148V155M1046.5 152V155M1056.5 148V155M1066.5 152V155M1076.5 148V155M1086.5 152V155M1096.5 148V155M1106.5 152V155M1116.5 148V155M1126.5 152V155M1136.5 148V155M92 723.5H95M88 713.5H95M92 703.5H95M88 693.5H95M92 683.5H95M88 673.5H95M92 663.5H95M88 653.5H95M92 643.5H95M88 633.5H95M92 623.5H95M88 613.5H95M92 603.5H95M88 593.5H95M92 583.5H95M88 573.5H95M92 563.5H95M88 553.5H95M92 543.5H95M88 533.5H95M92 523.5H95M88 513.5H95M92 503.5H95M88 493.5H95M92 483.5H95M88 473.5H95M92 463.5H95M88 453.5H95M92 443.5H95M88 433.5H95M92 423.5H95M88 413.5H95M92 403.5H95M88 393.5H95M92 383.5H95M88 373.5H95M92 363.5H95M88 353.5H95M92 343.5H95M88 333.5H95M92 323.5H95M88 313.5H95M92 303.5H95M88 293.5H95M92 283.5H95M88 273.5H95M92 263.5H95M88 253.5H95M92 243.5H95M88 233.5H95M92 223.5H95M88 213.5H95M92 203.5H95M88 193.5H95M92 183.5H95M88 173.5H95M92 163.5H95" stroke="#333" stroke-width="1" fill="none"/><g clip-path="url(#ct)" text-anchor="middle"><text x="96.5" y="140.800">2</text><text x="116.5" y="140.800">0</text><text x="136.5" y="140.800">2</text><text x="156.5" y="140.800">4</text><text x="176.5" y="140.800">6</text><text x="196.5" y="140.800">8</text><text x="216.5" y="140.800">10</text><text x="236.5" y="140.800">12</text><text x="256.5" y="140.800">14</text><text x="276.5" y="140.800">16</text><text x="296.5" y="140.800">18</text><text x="316.5" y="140.800">20</text><text x="336.5" y="140.800">22</text><text x="356.5" y="140.800">24</text><text x="376.5" y="140.800">26</text><text x="396.5" y="140.800">28</text><text x="416.5" y="140.800">30</text><text x="436.5" y="140.800">32</text><text x="456.5" y="140.800">34</text><text x="476.5" y="140.800">36</text><text x="496.5" y="140.800">38</text><text x="516.5" y="140.800">40</text><text x="536.5" y="140.800">42</text><text x="556.5" y="140.800">44</text><text x="576.5" y="140.800">46</text><text x="596.5" y="140.800">48</text><text x="616.5" y="140.800">50</text><text x="636.5" y="140.800">52</text><text x="656.5" y="140.800">54</text><text x="676.5" y="140.800">56</text><text x="696.5" y="140.800">58</text><text x="716.5" y="140.800">60</text><text x="736.5" y="140.800">62</text><text x="756.5" y="140.800">64</text><text x="776.5" y="140.800">66</text><text x="796.5" y="140.800">68</text><text x="816.5" y="140.800">70</text><text x="836.5" y="140.800">72</text><text x="856.5" y="140.800">74</text><text x="876.5" y="140.800">76</text><text x="896.5" y="140.800">78</text><text x="916.5" y="140.800">80</text><text x="936.5" y="140.800">82</text><text x="956.5" y="140.800">84</text><text x="976.5" y="140.800">86</text><text x="996.5" y="140.800">88</text><text x="1016.5" y="140.800">90</text><text x="1036.5" y="140.800">92</text><text x="1056.5" y="140.800">94</text><text x="1076.5" y="140.800">96</text><text x="1096.5" y="140.800">98</text><text x="1116.5" y="140.800">100</text><text x="1136.5" y="140.800">102</text></g><g clip-path="url(#cl)" text-anchor="middle"><text transform="translate(81.200,733.5) rotate(-90)">-20</text><text transform="translate(81.200,713.5) rotate(-90)">-18</text><text transform="translate(81.200,693.5) rotate(-90)">-16</text><text transform="translate(81.200,673.5) rotate(-90)">-14</text><text transform="translate(81.200,653.5) rotate(-90)">-12</text><text transform="translate(81.200,633.5) rotate(-90)">-10</text><text transform="translate(81.200,613.5) rotate(-90)">-8</text><text transform="translate(81.200,593.5) rotate(-90)">-6</text><text transform="translate(81.200,573.5) rotate(-90)">-4</text><text transform="translate(81.200,553.5) rotate(-90)">-2</text><text transform="translate(81.200,533.5) rotate(-90)">0</text><text transform="translate(81.200,513.5) rotate(-90)">2</text><text transform="translate(81.200,493.5) rotate(-90)">4</text><text transform="translate(81.200,473.5) rotate(-90)">6</text><text transform="translate(81.200,453.5) rotate(-90)">8</text><text transform="translate(81.200,433.5) rotate(-90)">10</text><text transform="translate(81.200,413.5) rotate(-90)">12</text><text transform="translate(81.200,393.5) rotate(-90)">14</text><text transform="translate(81.200,373.5) rotate(-90)">16</text><text transform="translate(81.200,353.5) rotate(-90)">18</text><text transform="translate(81.200,333.5) rotate(-90)">20</text><text transform="translate(81.200,313.5) rotate(-90)">22</text><text transform="translate(81.200,293.5) rotate(-90)">24</text><text transform="translate(81.200,273.5) rotate(-90)">26</text><text transform="translate(81.200,253.5) rotate(-90)">28</text><text transform="translate(81.200,233.5) rotate(-90)">30</text><text transform="translate(81.200,213.5) rotate(-90)">32</text><text transform="translate(81.200,193.5) rotate(-90)">34</text><text transform="translate(81.200,173.5) rotate(-90)">36</text><text transform="translate(81.200,153.5) rotate(-90)">38</text></g><path d="M451.500 145.500H461.500L456.500 152Z" fill="#000"/><path d="M85 388.500V398.500L91 393.500Z" fill="#000"/></svg>
<div id="canvas"><svg class="abs" style="left:0;top:0" width="1043" height="577" viewBox="95 155 1043 577" font-family="Liberation Sans, sans-serif">
<defs>
<pattern id="dots" x="116" y="533" width="10" height="10" patternUnits="userSpaceOnUse"><rect x="0" y="0" width="1" height="1" fill="#434343"/></pattern>
<pattern id="gl" x="116" y="533" width="100" height="100" patternUnits="userSpaceOnUse"><rect x="0" y="0" width="1" height="100" fill="#242424"/><rect x="0" y="0" width="100" height="1" fill="#242424"/></pattern>
<radialGradient id="ring" cx="456" cy="393.500" r="41" gradientUnits="userSpaceOnUse">
<stop offset="0.68" stop-color="#485866" stop-opacity="0"/>
<stop offset="0.76" stop-color="#485866" stop-opacity=".7"/>
<stop offset="0.86" stop-color="#526474" stop-opacity=".95"/>
<stop offset="0.95" stop-color="#485866" stop-opacity=".8"/>
<stop offset="1" stop-color="#485866" stop-opacity="0"/>
</radialGradient>
</defs>
<rect x="95" y="155" width="1043" height="577" fill="#000"/>
<rect x="95" y="155" width="1043" height="577" fill="url(#gl)"/>
<rect x="95" y="155" width="1043" height="577" fill="url(#dots)"/>
<!-- pointer ring -->
<circle cx="456" cy="393.5" r="41" fill="url(#ring)"/>
<!-- origin cross -->
<path d="M96 533.5H137M116.5 514V554" stroke="#a00000" stroke-width="1" fill="none"/>
<!-- center lines -->
<g stroke="#ff0000" stroke-width="1.4" fill="none" stroke-dasharray="17 7 2 7">
<path d="M195.6 443.5H1037.2"/>
<path d="M316.5 333V553.5" stroke-dashoffset="14.3"/>
<path d="M916.5 333V553.5" stroke-dashoffset="14.3"/>
</g>
<!-- geometry -->
<g stroke="#fff" stroke-width="3" fill="none">
<rect x="216.5" y="353.5" width="800" height="180"/>
<circle cx="316.5" cy="443.5" r="40"/>
<circle cx="916.5" cy="443.5" r="40"/>
</g>
<!-- pasted text preview -->
<rect x="446.5" y="305.5" width="20" height="177" fill="none" stroke="#6f8fd0" stroke-width="1" stroke-dasharray="7 3 1 3"/>
<text transform="translate(466,483) rotate(-90)" font-size="26.8" fill="#fff">104.245.02.4B</text>
<!-- crosshair guide lines -->
<g stroke="#9a7400" stroke-width="1" fill="none" stroke-dasharray="4.500 1.500">
<path d="M95 393.5H1138"/>
<path d="M456.5 155V732"/>
</g>
<circle cx="456.5" cy="393.5" r="5" fill="none" stroke="#d4a000" stroke-width="1" stroke-dasharray="3 2"/>
<path d="M440.5 393.5H471.5M456.2 378V409" stroke="#b4b4b4" stroke-width="3" fill="none"/>
<circle cx="456.5" cy="393.5" r="1.2" fill="#c89600"/>
<text x="464.5" y="411.3" font-size="13.2" fill="#f2bc28">Raster</text>
</svg>
</div>
<div id="vsb"><div class="abs" style="left:5px;top:127px;width:8px;height:322px;border-radius:4px;background:#7f7f7f"></div></div>
<div id="hsb"><div class="abs" style="left:185px;top:5px;width:634px;height:8px;border-radius:4px;background:#7f7f7f"></div><div class="abs" style="left:1004px;top:0;width:54px;height:16px;background:#ececec;font-size:13.500px;line-height:18px;text-align:right;padding-right:0">1 &lt; 10</div></div>
<div id="cmd"><div class="abs" style="left:0;top:0;width:1081px;height:2px;background:#c2c2c2"></div>
<div class="abs" style="left:0;top:2px;width:1081px;height:20px;background:#fff"></div>
<div class="abs" style="left:0;top:22px;width:1081px;height:1.500px;background:#c2c2c2"></div>
<span class="abs" style="left:5px;top:3px;font-size:13.200px;line-height:16px;color:#0000c8;white-space:nowrap"><i>Kommando:</i> paste</span>
<span class="abs" style="left:1px;top:29.500px;font-size:13.200px;line-height:16px;color:#111">Position:</span>
<div class="abs" style="left:55px;top:28px;width:999px;height:18px;background:#fff"></div>
<div class="abs" style="left:1055px;top:24px;width:26px;height:26px;border:1px solid #b6b6b6;background:linear-gradient(#f9f9f9,#e6e6e6)"><div class="abs" style="left:5px;top:7px;width:14px;height:10px;border:1px solid #111;border-top:3px solid #111;background:#fff"></div></div>
</div>
<div id="midborder"></div>
<div id="right"><div class="abs" style="left:0;top:0;width:299px;height:23px;background:linear-gradient(#f3f3f3,#e4e4e4)"></div>
<svg class="abs" style="left:0;top:0" width="60" height="23" viewBox="1155 107 60 23">
<circle cx="1164" cy="118" r="6.600" fill="#6e6e6e"/><path d="M1161.200 115.200L1166.800 120.800M1166.800 115.200L1161.200 120.800" stroke="#fff" stroke-width="2"/>
<circle cx="1182" cy="118" r="6.600" fill="#6e6e6e"/><rect x="1180.200" y="115" width="5" height="4" fill="none" stroke="#fff" stroke-width="1"/><rect x="1178.300" y="117" width="5" height="4" fill="#6e6e6e" stroke="#fff" stroke-width="1"/>
</svg>
<span class="abs" style="left:18px;top:5px;width:299px;text-align:center;font-size:11.500px;line-height:14px;letter-spacing:.2px;color:#1a1a1a">Layerliste</span>
<div class="abs" style="left:0;top:22px;width:299px;height:28px;background:#d9d9d9"></div>
<div class="lbtn" style="left:0px"></div><div class="lbtn" style="left:60px"></div><div class="lbtn" style="left:120px"></div><div class="lbtn" style="left:180px"></div><div class="lbtn" style="left:240px;width:59px"></div>
<svg class="abs" style="left:0;top:23px" width="299" height="120" viewBox="1155 130 299 120">
<defs>
<g id="eye"><g transform="scale(.9)"><path d="M-7.500 .3Q-3.500 -5.300 0 -5.300T7.500 .3Q3.500 4.800 0 4.800T-7.500 .3Z" fill="#fff" stroke="#000" stroke-width="1.600"/><path d="M-7.500 -.5Q-3.500 -6.500 0 -6.500T7.500 -.5" fill="none" stroke="#000" stroke-width="1.800"/><circle cx="0" cy="-.3" r="3.600" fill="#000"/><circle cx="-1.200" cy="-1.500" r="1" fill="#fff"/></g></g>
<g id="lock"><path d="M-3.700 -1V-4.500A3.700 3.700 0 0 1 3.700 -4.500V-1" fill="none" stroke="#c4c4c4" stroke-width="1.600"/><rect x="-5.300" y="-1.500" width="10.600" height="8.500" fill="#c4c4c4"/></g>
<g id="pen"><g transform="rotate(-45)"><path d="M-8 0L-4.500 -1.700H8.500V1.700H-4.500Z" fill="#e9a63a" stroke="#a87420" stroke-width=".5"/><path d="M-8 0L-4.500 -1.700V1.700Z" fill="#f0d9b0"/><path d="M-8 0L-6.500 -.7V.7Z" fill="#333"/><rect x="6.300" y="-1.700" width="2.200" height="3.400" fill="#d64040"/></g></g>
</defs>
<use href="#eye" x="1185" y="143"/>
<g opacity=".3"><use href="#eye" x="1245" y="143"/></g>
<path d="M1299.500 143H1310.500M1305 137.500V148.500" stroke="#e00000" stroke-width="2.600"/>
<path d="M1305 143h-5.500M1305 143v-5.500" stroke="#ff2020" stroke-width="1.200"/>
<path d="M1359.500 143H1370.500" stroke="#e00000" stroke-width="2.600"/>
<g transform="translate(1425,142.500) scale(1.2)"><use href="#pen"/></g>
<use href="#eye" x="1422.500" y="167"/><use href="#eye" x="1422.500" y="187"/><use href="#eye" x="1422.500" y="207"/><use href="#eye" x="1422.500" y="227"/>
<use href="#lock" x="1445" y="168.5"/><use href="#lock" x="1445" y="188.5"/><use href="#lock" x="1445" y="208.5"/><use href="#lock" x="1445" y="228.5"/>
<g transform="translate(1400.800,227) scale(1.1)"><use href="#pen"/></g>
</svg>
<div class="lrow" style="top:50px"><div class="sw" style="background:#fff"></div><span class="nm">0</span></div>
<div class="lrow" style="top:70px"><div class="sw" style="background:#f00"></div><span class="nm">Center</span></div>
<div class="lrow" style="top:90px"><div class="sw" style="background:#000"></div><span class="nm">Hidden</span></div>
<div class="lrow" style="top:110px"><div class="sw" style="background:#fff"></div><span class="nm">Visible</span></div>
</div>
<div id="rtb"><div class="hgrip" style="left:8px;top:9px;width:28px"></div>
<div class="pressed" style="left:2px;top:13.400px;width:42px;height:42.300px;background:#b7b7b7;border-radius:6px"></div>
<div class="pressed" style="left:2px;top:310.300px;width:42px;height:42.300px;background:#b7b7b7;border-radius:6px"></div>
<div class="hdots" style="left:3px;top:154px;width:43px"></div>
<div class="hdots" style="left:3px;top:302px;width:43px"></div>
<svg class="abs" style="left:0;top:0" width="46" height="420" viewBox="1454 107 46 420">
<rect x="1463.500" y="127.5" width="27" height="27" fill="#fff" stroke="#000" stroke-width="1"/><rect x="1463" y="127" width="28" height="4.600" fill="#000"/><rect x="1464" y="128" width="2.800" height="2.800" fill="#fff"/>
<g fill="#ececec" stroke="#444" stroke-width=".8"><path d="M1470 141.500l7.500-4v12.500l-7.500 4z"/><path d="M1472.300 140.500l7.500-4v12.500l-7.500 4z"/></g>
<path d="M1474.800 139.500l8-4.200v12.700l-8 4.200z" fill="#fff" stroke="#d83030" stroke-width=".9"/><path d="M1476.800 149.300l4.500-8.500v6.200z" fill="none" stroke="#e03030" stroke-width=".8"/>
<rect x="1463.500" y="174.5" width="27" height="27" fill="#fff" stroke="#000" stroke-width="1"/><rect x="1463" y="174" width="28" height="4.600" fill="#000"/><rect x="1464" y="175" width="2.800" height="2.800" fill="#fff"/>
<rect x="1470" y="184.500" width="10.300" height="7.600" fill="#f6eec0" stroke="#555" stroke-width=".9"/><circle cx="1479.400" cy="190.800" r="4.500" fill="#f6eec0" fill-opacity=".75" stroke="#555" stroke-width=".9"/>
<rect x="1463.500" y="220.5" width="27" height="27" fill="#fff" stroke="#000" stroke-width="1"/><rect x="1463" y="220" width="28" height="4.600" fill="#000"/><rect x="1464" y="221" width="2.800" height="2.800" fill="#fff"/>
<rect x="1468.700" y="230.600" width="16.600" height="11.200" rx="2.500" fill="#f3f3f3" stroke="#b8cce8" stroke-width="1.400"/>
<rect x="1463.500" y="276.5" width="27" height="27" fill="#fff" stroke="#000" stroke-width="1"/><rect x="1463" y="276" width="28" height="4.600" fill="#000"/><rect x="1464" y="277" width="2.800" height="2.800" fill="#fff"/>
<g fill="#000"><rect x="1466" y="284.300" width="5" height="3"/><rect x="1466" y="290.300" width="5" height="3"/><rect x="1466" y="296.300" width="5" height="3"/></g>
<g fill="#fff" stroke="#222" stroke-width=".8"><rect x="1473.800" y="284.300" width="13.700" height="3"/><rect x="1473.800" y="290.300" width="13.700" height="3"/><rect x="1473.800" y="296.300" width="13.700" height="3"/></g>
<rect x="1463.500" y="322.5" width="27" height="27" fill="#fff" stroke="#000" stroke-width="1"/><rect x="1463" y="322" width="28" height="4.600" fill="#000"/><rect x="1464" y="323" width="2.800" height="2.800" fill="#fff"/>
<path d="M1469.500 331.500q7.500-2.500 15 0l-5.800 6.500v7.500l-3.400-1v-6.500z" fill="#9a9a9a" stroke="#666" stroke-width=".7"/><ellipse cx="1477" cy="331.500" rx="7.500" ry="1.700" fill="#c8c8c8" stroke="#666" stroke-width=".6"/>
<rect x="1463.500" y="368.5" width="27" height="27" fill="#fff" stroke="#000" stroke-width="1"/><rect x="1463" y="368" width="28" height="4.600" fill="#000"/><rect x="1464" y="369" width="2.800" height="2.800" fill="#fff"/>
<path d="M1469.500 377l4.500 2.500v10l-4.500 2.500z" fill="#fff" stroke="#333" stroke-width=".9"/><rect x="1474" y="380.200" width="11" height="8.600" rx="1.200" fill="#a8a8a8" stroke="#777" stroke-width=".6"/><path d="M1477 381v7M1479.500 381v7M1482 381v7" stroke="#8a8a8a" stroke-width=".7"/><path d="M1467 384.500h19.500" stroke="#f08080" stroke-width=".8" stroke-dasharray="3 1 1 1"/>
<rect x="1463.500" y="425.0" width="27" height="27" fill="#fff" stroke="#000" stroke-width="1"/><rect x="1463" y="424.5" width="28" height="4.600" fill="#000"/><rect x="1464" y="425.5" width="2.800" height="2.800" fill="#fff"/>
<path d="M1467 434.500h11M1467 437.500h9M1467 440.500h12.500M1467 443.500h12" stroke="#777" stroke-width=".9" stroke-dasharray="2.500 .600 3 .600"/>
<path d="M1463.500 446.800h27" stroke="#000" stroke-width=".8"/><path d="M1471 449.300h15" stroke="#444" stroke-width="1" stroke-dasharray="2 .500"/><path d="M1467 448.400l-1 .9l1 .9" stroke="#444" stroke-width=".6" fill="none"/>
<rect x="1463.500" y="471.5" width="27" height="27" fill="#fff" stroke="#000" stroke-width="1"/><rect x="1463" y="471" width="28" height="4.600" fill="#000"/><rect x="1464" y="472" width="2.800" height="2.800" fill="#fff"/>
<g transform="translate(1477,487) scale(.53) translate(-678,-46.500)">
<rect x="664.400" y="33" width="27" height="27.500" rx="1.600" fill="#c2872f" stroke="#a06a1c" stroke-width=".8"/><path d="M668 35h20.500v23.700h-20.500z" fill="#f8f8f8"/><path d="M671.300 40h14M671.300 43h14M671.300 46h11M671.300 49h14M671.300 52h8" stroke="#c2c2c2" stroke-width="1.300"/><path d="M688.500 53v5.700h-5.700z" fill="#8f8f8f"/><path d="M671 34.600q0-2 2-2h1.600v-1.700q0-.8.800-.8h4.800q.8 0 .8.800v1.700h1.600q2 0 2 2v2.100h-13.600z" fill="#a3a396" stroke="#7d7d70" stroke-width=".6"/>
</g>
</svg></div>
<div id="status"><span style="left:3px;top:9px">34,14</span><span style="left:3px;top:29px">-</span>
<div class="abs" style="left:253px;top:5px;width:1px;height:37px;background:#8f8f8f"></div>
<span style="left:256px;top:9px">36.7696&lt;22°</span><span style="left:256px;top:29px">-</span>
<div class="abs" style="left:506px;top:21px;width:6px;height:6px;border-radius:3px;background:#cfcfcf"></div>
<span style="left:662px;top:19px">Position</span>
<svg class="abs" style="left:716px;top:6px" width="22" height="34" viewBox="716 804 22 34"><rect x="717.500" y="806.500" width="17" height="29" rx="8.500" fill="#fff" stroke="#333" stroke-width="1"/><path d="M717.500 820Q726 818.500 734.500 820" stroke="#444" stroke-width="1" fill="none"/><path d="M726 815.500V819" stroke="#444" stroke-width=".9"/><rect x="724.700" y="808.300" width="2.600" height="7" rx="1.300" fill="#fff" stroke="#333" stroke-width=".9"/></svg>
<span style="left:754px;top:19px">Abbrechen</span>
<div class="abs" style="left:940px;top:21px;width:6px;height:6px;border-radius:3px;background:#cfcfcf"></div>
<span style="left:949px;top:19px">Keine Objekte selektiert.</span>
<div class="abs" style="left:1269px;top:21px;width:6px;height:6px;border-radius:3px;background:#cfcfcf"></div>
</div>
</div></body></html>
